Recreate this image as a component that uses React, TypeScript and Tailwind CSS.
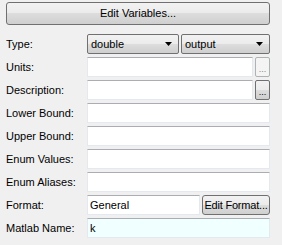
import React from "react";

const font = { fontFamily: '"Liberation Sans", Arial, sans-serif' };

function Field({ value = "", className = "", tinted }: { value?: string; className?: string; tinted?: boolean }) {
  return (
    <div
      className={`h-[20px] border border-[#e3e9ef] border-t-[#abadb3] pl-[2px] text-[11px] leading-[18px] text-black ${
        tinted ? "bg-[#f0ffff]" : "bg-white"
      } ${className}`}
    >
      {value}
    </div>
  );
}

function Arrow() {
  return (
    <svg width="7" height="4" viewBox="0 0 7 4" className="block">
      <polygon points="0,0 7,0 3.5,4" fill="#000" />
    </svg>
  );
}

function Combo({ text, className = "" }: { text: string; className?: string }) {
  return (
    <div
      className={`flex h-[20px] items-center justify-between rounded-[2px] border border-[#707070] bg-[linear-gradient(#f2f2f2_0%,#ebebeb_50%,#dddddd_50%,#cfcfcf_100%)] pl-[3px] pr-[6px] text-[11px] text-black ${className}`}
    >
      <span>{text}</span>
      <Arrow />
    </div>
  );
}

function Ellipsis({ disabled }: { disabled?: boolean }) {
  return (
    <div
      className={`flex h-[20px] w-[15px] items-end justify-center rounded-[2px] border pb-[2px] text-[9px] leading-[9px] ${
        disabled
          ? "border-[#adb2b5] bg-[#f4f4f4] text-[#838383]"
          : "border-[#707070] bg-[linear-gradient(#f2f2f2_0%,#ebebeb_50%,#dddddd_50%,#cfcfcf_100%)] text-black"
      }`}
    >
      ...
    </div>
  );
}

function Label({ children }: { children: React.ReactNode }) {
  return <div className="flex h-[20px] items-center text-[11px] text-black">{children}</div>;
}

export default function App() {
  return (
    <div style={font} className="h-[245px] w-[282px] bg-[#f0f0f0] pl-[6px] pt-[2px]">
      <div className="flex h-[23px] w-[264px] items-center justify-center rounded-[3px] border border-[#707070] bg-[linear-gradient(#f2f2f2_0%,#ebebeb_50%,#dddddd_50%,#cfcfcf_100%)] text-[11px] text-black">
        Edit Variables...
      </div>
      <div className="mt-[9px] grid w-[264px] grid-cols-[81px_183px] gap-y-[3px]">
        <Label>Type:</Label>
        <div className="flex gap-[2px]">
          <Combo text="double" className="w-[92px]" />
          <Combo text="output" className="w-[89px]" />
        </div>

        <Label>Units:</Label>
        <div className="flex gap-[2px]">
          <Field className="w-[166px]" />
          <Ellipsis disabled />
        </div>

        <Label>Description:</Label>
        <div className="flex gap-[2px]">
          <Field className="w-[166px]" />
          <Ellipsis />
        </div>

        <Label>Lower Bound:</Label>
        <Field />

        <Label>Upper Bound:</Label>
        <Field />

        <Label>Enum Values:</Label>
        <Field />

        <Label>Enum Aliases:</Label>
        <Field />

        <Label>Format:</Label>
        <div className="flex gap-[2px]">
          <Field value="General" className="w-[113px]" />
          <div className="flex h-[20px] w-[68px] items-center justify-center whitespace-nowrap rounded-[3px] border border-[#707070] bg-[linear-gradient(#f2f2f2_0%,#ebebeb_50%,#dddddd_50%,#cfcfcf_100%)] text-[11px] tracking-[-0.2px] text-black">
            Edit Format...
          </div>
        </div>

        <Label>Matlab Name:</Label>
        <Field value="k" tinted />
      </div>
    </div>
  );
}
